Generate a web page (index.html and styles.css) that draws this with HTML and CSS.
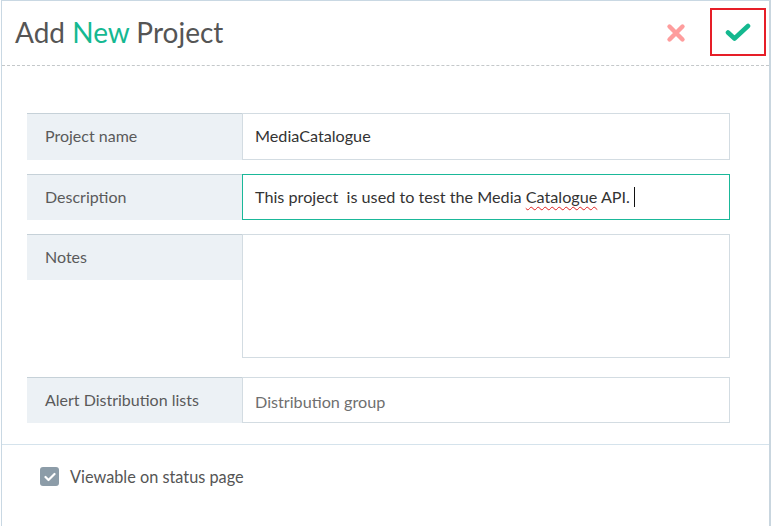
FILE: index.html
```html
<!DOCTYPE html>
<html>
<head>
<meta charset="utf-8">
<link rel="stylesheet" href="styles.css">
</head>
<body>
<div class="dialog">
  <div class="header">
    <h1 class="title">Add <span class="accent">New</span> Project</h1>
    <div class="actions">
      <button class="btn btn-close" aria-label="Cancel">
        <svg width="20" height="20" viewBox="0 0 20 20"><path d="M3.5 3.5 L16.5 16.5 M16.5 3.5 L3.5 16.5" stroke="#fe9d9d" stroke-width="4.4" stroke-linecap="round"/></svg>
      </button>
      <button class="btn btn-save" aria-label="Save">
        <svg width="26" height="20" viewBox="0 0 26 20"><path d="M3 10.5 L9.5 16.5 L23 4" fill="none" stroke="#14b88f" stroke-width="4.6" stroke-linecap="round" stroke-linejoin="round"/></svg>
      </button>
    </div>
  </div>
  <div class="form">
    <div class="row row-first">
      <div class="label">Project name</div>
      <div class="field">MediaCatalogue</div>
    </div>
    <div class="row">
      <div class="label">Description</div>
      <div class="field focused"><span class="pre">This project  is used to test the Media </span><span class="spell">Catalogue</span><span class="pre"> API.</span><span class="caret"></span></div>
    </div>
    <div class="row row-notes">
      <div class="label">Notes</div>
      <div class="field area"></div>
    </div>
    <div class="row row-alert">
      <div class="label">Alert Distribution lists</div>
      <div class="field placeholder">Distribution group</div>
    </div>
  </div>
  <div class="footer">
    <label class="check">
      <span class="box">
        <svg width="12" height="10" viewBox="0 0 12 10"><path d="M1.5 5 L4.5 8 L10.5 2" fill="none" stroke="#fff" stroke-width="2.2" stroke-linecap="round" stroke-linejoin="round"/></svg>
      </span>
      <span class="check-text">Viewable on status page</span>
    </label>
  </div>
</div>
</body>
</html>
```
FILE: styles.css
```css
* { box-sizing: border-box; }
html, body { margin: 0; padding: 0; background: #fff; }
body {
  font-family: Lato, "Open Sans", "Liberation Sans", sans-serif;
  color: #555;
  width: 772px;
  height: 526px;
  overflow: hidden;
}
.dialog {
  margin-left: 1px;
  width: 770px;
  height: 526px;
  border: 1px solid #c9d8e3;
  border-bottom: none;
  border-right: 2px solid #c9d6df;
}
.header {
  height: 65px;
  display: flex;
  align-items: center;
  justify-content: space-between;
  border-bottom: 1px dashed #c4c8ca;
  padding-left: 13px;
  padding-right: 3px;
}
.title {
  margin: 0;
  font-weight: 400;
  font-size: 28px;
  color: #555;
  padding-bottom: 2px;
}
.accent { color: #15b891; }
.actions { display: flex; align-items: center; gap: 22px; }
.btn {
  background: none;
  border: none;
  padding: 0;
  display: flex;
  align-items: center;
  justify-content: center;
  cursor: pointer;
}
.btn-close { width: 24px; height: 48px; }
.btn-save {
  width: 56px;
  height: 48px;
  border: 2px solid #e61e28;
  margin-top: -2px;
}
.form {
  padding: 47px 39px 0 25px;
  display: flex;
  flex-direction: column;
  gap: 14px;
}
.row { display: flex; align-items: flex-start; }
.row-alert { margin-top: 5px; }
.label {
  width: 215px;
  height: 46px;
  flex: none;
  background: #ecf1f5;
  border-top: 1px solid #c6d1d8;
  font-size: 16px;
  color: #5a5a5a;
  padding: 12px 0 0 18px;
}
.field {
  flex: 1;
  height: 46px;
  border: 1px solid #d3dce2;
  font-size: 16.2px;
  color: #333;
  padding: 12px 12px 0 12px;
  display: flex;
  align-items: flex-start;
  white-space: nowrap;
}
.row-first .field, .row-first .label { height: 47px; }
.focused { border-color: #1ab899; }
.pre { white-space: pre; }
.spell {
  text-decoration: underline wavy #e02020;
  text-decoration-thickness: 1px;
  text-underline-offset: 3px;
}
.caret {
  display: inline-block;
  width: 1px;
  height: 20px;
  background: #111;
  margin-left: 4px;
}
.area { height: 124px; }
.placeholder { color: #6f6f6f; padding-top: 14px; }
.footer {
  margin-top: 21px;
  border-top: 1px solid #d5e3ec;
  padding: 22px 0 0 38px;
}
.check { display: flex; align-items: center; gap: 11px; }
.box {
  width: 19px;
  height: 19px;
  border-radius: 3px;
  background: #8c9ca8;
  display: flex;
  align-items: center;
  justify-content: center;
}
.check-text { font-size: 16.3px; color: #555; }
```
